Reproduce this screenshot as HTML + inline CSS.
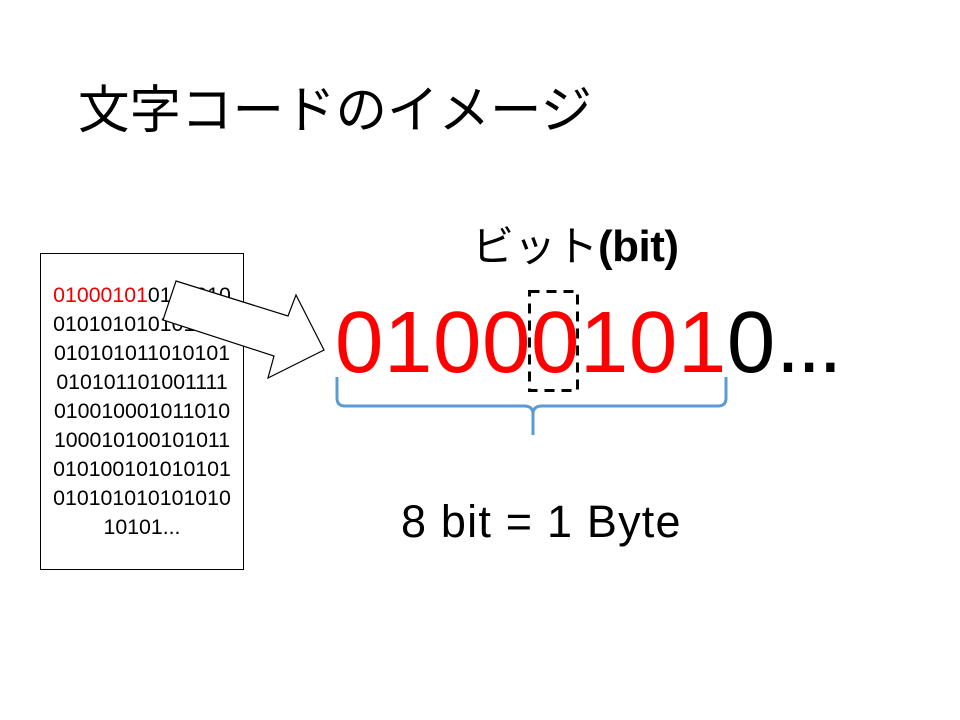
<!DOCTYPE html>
<html><head><meta charset="utf-8"><style>
html,body{margin:0;padding:0;background:#fff;}
body{width:960px;height:720px;position:relative;overflow:hidden;font-family:"Liberation Sans","Noto Sans CJK JP",sans-serif;}
.a{position:absolute;white-space:nowrap;line-height:1;}
</style></head><body>
<div class="a" style="left:78px;top:80px;font-size:51.5px;font-family:'Noto Sans CJK JP',sans-serif;">文字コードのイメージ</div>
<div class="a" style="left:472px;top:223px;font-size:42px;font-family:'Noto Sans CJK JP',sans-serif;">ビット<span style="font-family:'Liberation Sans',sans-serif;font-weight:bold;font-size:44px;letter-spacing:-0.5px;">(bit)</span></div>
<div style="position:absolute;left:40px;top:253px;width:202px;height:315px;border:1px solid #000;"></div>
<div class="a" style="left:40px;top:281px;width:204px;text-align:center;font-size:21.3px;line-height:29px;white-space:normal;">
<span style="color:#e00">01000101</span>0101010<br>010101010101010<br>010101011010101<br>010101101001111<br>010010001011010<br>100010100101011<br>010100101010101<br>010101010101010<br>10101...</div>
<svg style="position:absolute;left:0;top:0" width="960" height="720">
<polygon points="176,281 288,316 296,295 324,350 268,378 274,356 163,320" fill="#fff" stroke="#000" stroke-width="1.2"/>
<rect x="529.5" y="291.5" width="48" height="99" fill="none" stroke="#000" stroke-width="3" stroke-dasharray="10,7"/>
<path d="M337,377 V398 Q337,406 345,406 H524 Q533,406 533,414 V435 M533,414 Q533,406 542,406 H718 Q726,406 726,398 V377" fill="none" stroke="#5b9bd5" stroke-width="3"/>
</svg>
<div class="a" style="left:335px;top:299px;font-size:87px;letter-spacing:0.6px;"><span style="color:#f00">01000101</span>0<span style="letter-spacing:-3px;">...</span></div>
<div class="a" style="left:401px;top:499px;font-size:45px;letter-spacing:1.2px;">8 bit = 1 Byte</div>
</body></html>
